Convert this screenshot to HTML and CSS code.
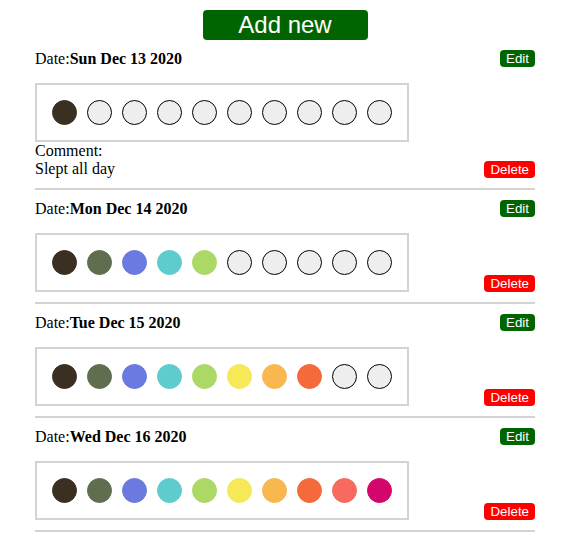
FILE: index.html
```html
<!DOCTYPE html>
<html>
<head>
<meta charset="utf-8">
<link rel="stylesheet" href="styles.css">
</head>
<body>
<div class="page">
  <button class="add">Add new</button>

  <div class="entry">
    <div class="date-row">
      <span class="date">Date:<b>Sun Dec 13 2020</b></span>
      <button class="btn edit">Edit</button>
    </div>
    <div class="body-row">
      <div class="main">
        <div class="circles">
          <span class="c c1"></span><span class="c"></span><span class="c"></span><span class="c"></span><span class="c"></span><span class="c"></span><span class="c"></span><span class="c"></span><span class="c"></span><span class="c"></span>
        </div>
        <div class="comment">Comment:<br>Slept all day</div>
      </div>
      <button class="btn delete">Delete</button>
    </div>
  </div>

  <div class="entry">
    <div class="date-row">
      <span class="date">Date:<b>Mon Dec 14 2020</b></span>
      <button class="btn edit">Edit</button>
    </div>
    <div class="body-row">
      <div class="main">
        <div class="circles">
          <span class="c c1"></span><span class="c c2"></span><span class="c c3"></span><span class="c c4"></span><span class="c c5"></span><span class="c"></span><span class="c"></span><span class="c"></span><span class="c"></span><span class="c"></span>
        </div>
      </div>
      <button class="btn delete">Delete</button>
    </div>
  </div>

  <div class="entry">
    <div class="date-row">
      <span class="date">Date:<b>Tue Dec 15 2020</b></span>
      <button class="btn edit">Edit</button>
    </div>
    <div class="body-row">
      <div class="main">
        <div class="circles">
          <span class="c c1"></span><span class="c c2"></span><span class="c c3"></span><span class="c c4"></span><span class="c c5"></span><span class="c c6"></span><span class="c c7"></span><span class="c c8"></span><span class="c"></span><span class="c"></span>
        </div>
      </div>
      <button class="btn delete">Delete</button>
    </div>
  </div>

  <div class="entry">
    <div class="date-row">
      <span class="date">Date:<b>Wed Dec 16 2020</b></span>
      <button class="btn edit">Edit</button>
    </div>
    <div class="body-row">
      <div class="main">
        <div class="circles">
          <span class="c c1"></span><span class="c c2"></span><span class="c c3"></span><span class="c c4"></span><span class="c c5"></span><span class="c c6"></span><span class="c c7"></span><span class="c c8"></span><span class="c c9"></span><span class="c c10"></span>
        </div>
      </div>
      <button class="btn delete">Delete</button>
    </div>
  </div>
</div>
</body>
</html>
```

FILE: styles.css
```css
html, body {
  margin: 0;
  padding: 0;
  background: #fff;
}
body {
  font-family: "Liberation Serif", "Times New Roman", serif;
  font-size: 16px;
  color: #000;
}
.page {
  width: 500px;
  margin: 0 auto;
  padding-top: 10px;
  display: flex;
  flex-direction: column;
}
.add {
  align-self: center;
  width: 165px;
  height: 30px;
  margin: 0;
  padding: 0;
  border: none;
  border-radius: 4px;
  background: #006400;
  color: #fff;
  font-family: "Liberation Sans", Arial, sans-serif;
  font-size: 24px;
  line-height: 30px;
}
.entry {
  padding-top: 10px;
  padding-bottom: 10px;
  border-bottom: 2px solid #d3d3d3;
}
.date-row {
  display: flex;
  justify-content: space-between;
  align-items: center;
  height: 17px;
}
.date {
  line-height: 18px;
}
.btn {
  margin: 0;
  padding: 0 6px;
  border: none;
  border-radius: 4px;
  color: #fff;
  font-family: "Liberation Sans", Arial, sans-serif;
  font-size: 13.333px;
  height: 17px;
  line-height: 17px;
}
.edit {
  background: #006400;
}
.delete {
  background: #ff0000;
}
.body-row {
  margin-top: 16px;
  display: flex;
  justify-content: space-between;
  align-items: flex-end;
}
.circles {
  width: 340px;
  padding: 15px;
  border: 2px solid #d3d3d3;
  display: flex;
  gap: 10px;
}
.c {
  width: 25px;
  height: 25px;
  box-sizing: border-box;
  border-radius: 50%;
  border: 1px solid #000;
  background: #eee;
}
.c1 { background: #3b2f22; border-color: #3b2f22; }
.c2 { background: #5f6e4e; border-color: #5f6e4e; }
.c3 { background: #6b7ade; border-color: #6b7ade; }
.c4 { background: #5ecbcc; border-color: #5ecbcc; }
.c5 { background: #acd866; border-color: #acd866; }
.c6 { background: #f7e857; border-color: #f7e857; }
.c7 { background: #f8b84f; border-color: #f8b84f; }
.c8 { background: #f46a3b; border-color: #f46a3b; }
.c9 { background: #f96a5e; border-color: #f96a5e; }
.c10 { background: #d4066b; border-color: #d4066b; }
.comment {
  line-height: 18px;
}
```
